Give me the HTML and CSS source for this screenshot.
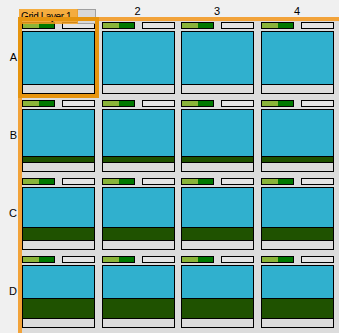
FILE: index.html
```html
<!DOCTYPE html>
<html lang="en">
<head>
<meta charset="UTF-8">
<title>Grid Layer</title>
<link rel="stylesheet" href="styles.css">
</head>
<body>

<div class="layout">
  <div class="corner"></div>
  <div class="colHead">
    <span></span>
    <span>2</span>
    <span>3</span>
    <span>4</span>
  </div>
  <div class="rowHead">
    <span>A</span>
    <span>B</span>
    <span>C</span>
    <span>D</span>
  </div>

  <div class="board" id="board"></div>
</div>

<div class="tabGhost"></div>
<div class="tab">Grid Layer 1</div>
<div class="selection"></div>

<script>
  // height of the dark green fill in each row
  var levels = [0, 5, 12, 19];
  var board = document.getElementById("board");

  for (var r = 0; r < 4; r++) {
    for (var c = 0; c < 4; c++) {
      var cell = document.createElement("div");
      cell.className = "cell";
      var fill = levels[r] > 0
        ? '<div class="ground" style="height:' + levels[r] + 'px"></div>'
        : '';
      cell.innerHTML =
        '<div class="bars">' +
          '<div class="meter"><div class="meterLight"></div><div class="meterDark"></div></div>' +
          '<div class="slot"></div>' +
        '</div>' +
        '<div class="box">' +
          '<div class="sky"></div>' + fill +
          '<div class="foot"></div>' +
        '</div>';
      board.appendChild(cell);
    }
  }
</script>
</body>
</html>
```

FILE: styles.css
```css
body {
  margin: 0;
  background-color: #f0f0f0;
  font-family: "Liberation Sans", Arial, sans-serif;
  font-size: 11px;
  color: #000;
  overflow: hidden;
}

.layout {
  display: grid;
  grid-template-columns: 18px 321px;
  grid-template-rows: 17px 316px;
  width: 339px;
  height: 333px;
}

.colHead {
  display: grid;
  grid-template-columns: 80px 79px 80px 80px;
}

.colHead span {
  text-align: center;
  padding-top: 6px;
  line-height: 11px;
}

.rowHead {
  display: grid;
  grid-template-rows: repeat(4, 78px);
  padding-top: 1px;
}

.rowHead span {
  display: flex;
  align-items: center;
  justify-content: flex-end;
  padding-right: 1px;
}

.board {
  background-color: #dcdcdc;
  border-top: 4px solid #f2a33a;
  border-left: 4px solid #f2a33a;
  display: grid;
  grid-template-columns: 80px 79px 80px 80px;
  grid-template-rows: repeat(4, 78px);
  padding-top: 1px;
}

.cell {
  width: 73px;
  display: flex;
  flex-direction: column;
}

.bars {
  display: flex;
  justify-content: space-between;
  height: 7px;
  margin-bottom: 2px;
}

.meter {
  width: 33px;
  border: 1px solid #000;
  box-sizing: border-box;
  display: flex;
}

.meterLight {
  width: 16px;
  background-color: #8ab43a;
}

.meterDark {
  flex: 1;
  background-color: #007800;
}

.slot {
  width: 33px;
  border: 1px solid #000;
  box-sizing: border-box;
  background-color: #e4e4e4;
}

.box {
  height: 63px;
  border: 1px solid #000;
  box-sizing: border-box;
  display: flex;
  flex-direction: column;
}

.sky {
  flex: 1;
  background-color: #30b0ce;
}

.ground {
  border-top: 1px solid #000;
  background-color: #1f5200;
}

.foot {
  height: 8px;
  border-top: 1px solid #000;
  background-color: #dcdcdc;
}

.selection {
  position: absolute;
  left: 18px;
  top: 17px;
  width: 81px;
  height: 81px;
  box-sizing: border-box;
  border: 4px solid #e6940e;
}

.tabGhost {
  position: absolute;
  left: 77px;
  top: 9px;
  width: 19px;
  height: 15px;
  box-sizing: border-box;
  border: 1px solid #a0a0a0;
  background-color: #d8d8d8;
}

.tab {
  position: absolute;
  left: 19px;
  top: 9px;
  width: 59px;
  height: 15px;
  box-sizing: border-box;
  padding-left: 2px;
  background-color: rgba(245, 160, 30, 0.85);
  font-size: 10px;
  letter-spacing: -0.4px;
  line-height: 16px;
  white-space: nowrap;
}
```
